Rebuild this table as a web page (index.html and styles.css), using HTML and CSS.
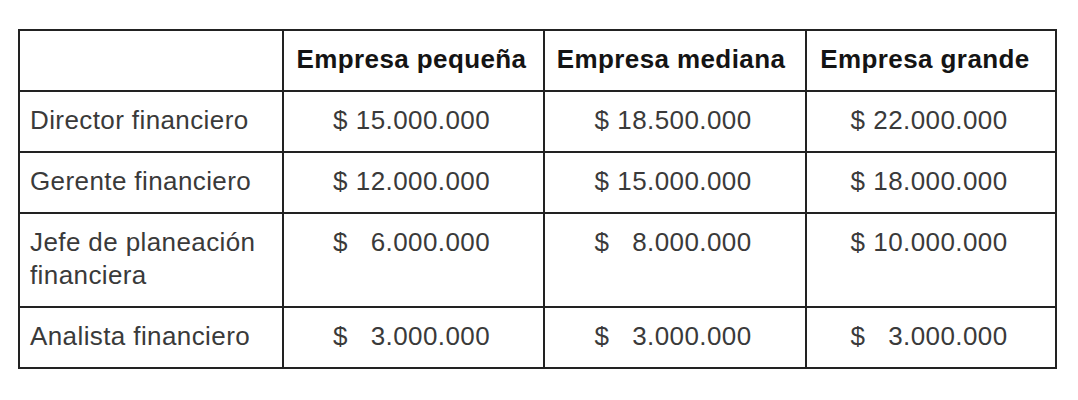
FILE: index.html
```html
<!DOCTYPE html>
<html lang="es">
<head>
<meta charset="utf-8">
<title>Salarios</title>
<link rel="stylesheet" href="styles.css">
</head>
<body>
<table class="salaries">
  <colgroup>
    <col class="c-label">
    <col class="c-small">
    <col class="c-mid">
    <col class="c-big">
  </colgroup>
  <thead>
    <tr>
      <th class="corner"></th>
      <th class="h-small">Empresa pequeña</th>
      <th class="h-mid">Empresa mediana</th>
      <th class="h-big">Empresa grande</th>
    </tr>
  </thead>
  <tbody>
    <tr>
      <td class="label">Director financiero</td>
      <td class="val"><span class="amt"><span>$</span><span>15.000.000</span></span></td>
      <td class="val"><span class="amt"><span>$</span><span>18.500.000</span></span></td>
      <td class="val"><span class="amt"><span>$</span><span>22.000.000</span></span></td>
    </tr>
    <tr>
      <td class="label">Gerente financiero</td>
      <td class="val"><span class="amt"><span>$</span><span>12.000.000</span></span></td>
      <td class="val"><span class="amt"><span>$</span><span>15.000.000</span></span></td>
      <td class="val"><span class="amt"><span>$</span><span>18.000.000</span></span></td>
    </tr>
    <tr>
      <td class="label">Jefe de planeación financiera</td>
      <td class="val"><span class="amt"><span>$</span><span>6.000.000</span></span></td>
      <td class="val"><span class="amt"><span>$</span><span>8.000.000</span></span></td>
      <td class="val"><span class="amt"><span>$</span><span>10.000.000</span></span></td>
    </tr>
    <tr>
      <td class="label">Analista financiero</td>
      <td class="val"><span class="amt"><span>$</span><span>3.000.000</span></span></td>
      <td class="val"><span class="amt"><span>$</span><span>3.000.000</span></span></td>
      <td class="val"><span class="amt"><span>$</span><span>3.000.000</span></span></td>
    </tr>
  </tbody>
</table>
</body>
</html>
```
FILE: styles.css
```css
html, body {
  margin: 0;
  padding: 0;
  background: #ffffff;
}

body {
  padding: 29px 0 0 18px;
  font-family: "Liberation Sans", Arial, sans-serif;
}

.salaries {
  border-collapse: collapse;
  table-layout: fixed;
  width: 1037px;
  font-size: 26px;
  letter-spacing: 0.4px;
  line-height: 33px;
  color: #3a3a3a;
}

.c-label { width: 264px; }
.c-small { width: 261px; }
.c-mid { width: 262px; }
.c-big { width: 250px; }

.salaries th,
.salaries td {
  border: 2px solid #222222;
  padding: 12px 10px 14px 10px;
  vertical-align: top;
}

.salaries th {
  font-weight: bold;
  color: #141414;
  text-align: center;
  padding-left: 2px;
  padding-right: 6px;
}

.salaries th.h-mid {
  padding-right: 10px;
}

.salaries th.h-big {
  padding-right: 14px;
}

.salaries td.label {
  text-align: left;
}

.salaries td.val {
  text-align: center;
  padding-left: 6px;
  padding-right: 10px;
}

.amt {
  display: inline-flex;
  justify-content: space-between;
  width: 157px;
}
```
